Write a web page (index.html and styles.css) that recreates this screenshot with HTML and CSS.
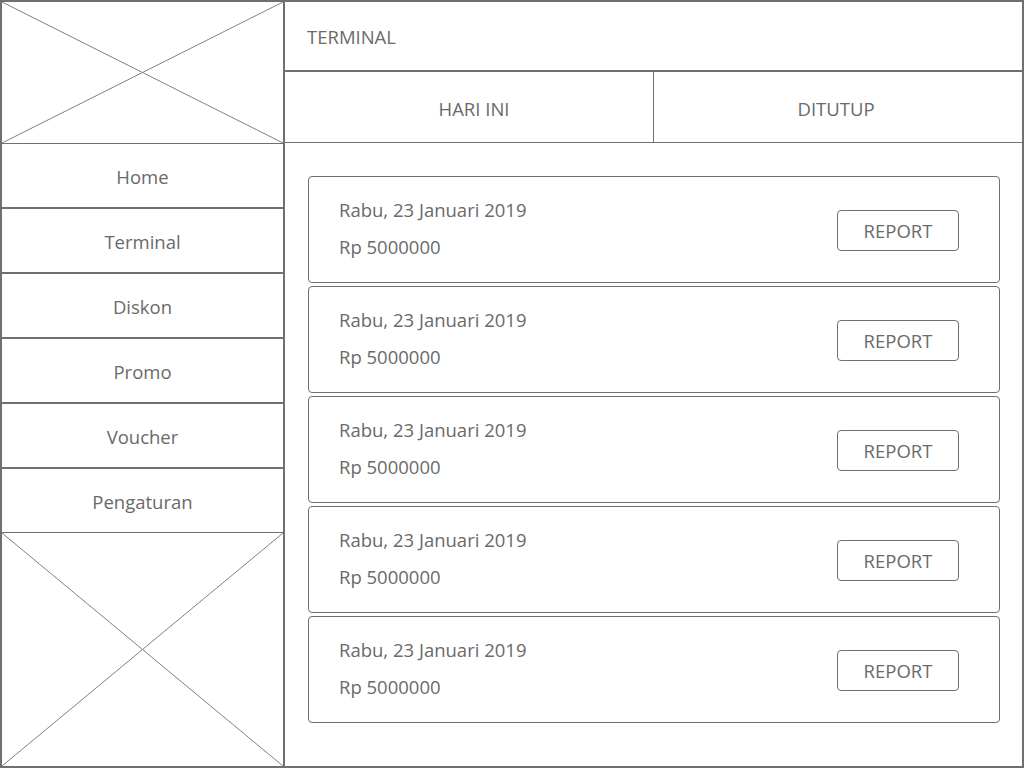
FILE: index.html
```html
<!DOCTYPE html>
<html lang="id">
<head>
<meta charset="utf-8">
<title>Terminal</title>
<link rel="stylesheet" href="styles.css">
</head>
<body>
<div class="app">
  <aside class="sidebar">
    <div class="placeholder logo">
      <svg class="cross" viewBox="0 0 100 100" preserveAspectRatio="none">
        <line x1="0" y1="0" x2="100" y2="100"/>
        <line x1="100" y1="0" x2="0" y2="100"/>
      </svg>
    </div>
    <nav class="menu">
      <div class="menu-item first">Home</div>
      <div class="menu-item">Terminal</div>
      <div class="menu-item">Diskon</div>
      <div class="menu-item">Promo</div>
      <div class="menu-item">Voucher</div>
      <div class="menu-item last">Pengaturan</div>
    </nav>
    <div class="placeholder bottom">
      <svg class="cross" viewBox="0 0 100 100" preserveAspectRatio="none">
        <line x1="0" y1="0" x2="100" y2="100"/>
        <line x1="100" y1="0" x2="0" y2="100"/>
      </svg>
    </div>
  </aside>
  <main class="main">
    <header class="title">TERMINAL</header>
    <div class="tabs">
      <div class="tab">HARI INI</div>
      <div class="tab">DITUTUP</div>
    </div>
    <section class="list">
      <div class="card">
        <div class="info"><div>Rabu, 23 Januari 2019</div><div>Rp 5000000</div></div>
        <div class="btn">REPORT</div>
      </div>
      <div class="card">
        <div class="info"><div>Rabu, 23 Januari 2019</div><div>Rp 5000000</div></div>
        <div class="btn">REPORT</div>
      </div>
      <div class="card">
        <div class="info"><div>Rabu, 23 Januari 2019</div><div>Rp 5000000</div></div>
        <div class="btn">REPORT</div>
      </div>
      <div class="card">
        <div class="info"><div>Rabu, 23 Januari 2019</div><div>Rp 5000000</div></div>
        <div class="btn">REPORT</div>
      </div>
      <div class="card">
        <div class="info"><div>Rabu, 23 Januari 2019</div><div>Rp 5000000</div></div>
        <div class="btn">REPORT</div>
      </div>
    </section>
  </main>
</div>
</body>
</html>
```
FILE: styles.css
```css
* { box-sizing: border-box; }
html, body { margin: 0; padding: 0; background: #fff; }
body {
  font-family: "Open Sans", "Liberation Sans", sans-serif;
  font-size: 18.5px;
  color: #6a6a6a;
}
.app {
  width: 1024px;
  height: 768px;
  border: 2px solid #707070;
  display: grid;
  grid-template-columns: 283px 1fr;
  overflow: hidden;
}
.sidebar {
  border-right: 2px solid #707070;
  display: flex;
  flex-direction: column;
  min-height: 0;
}
.placeholder { position: relative; }
.logo { height: 142px; border-bottom: 1px solid #707070; }
.bottom { flex: 1; }
.cross {
  position: absolute;
  inset: 0;
  width: 100%;
  height: 100%;
}
.cross line {
  stroke: #808080;
  stroke-width: 1;
  vector-effect: non-scaling-stroke;
}
.menu { display: flex; flex-direction: column; }
.menu-item {
  height: 65px;
  border-bottom: 2px solid #707070;
  display: flex;
  align-items: center;
  justify-content: center;
  padding-top: 1px;
}
.menu-item.first { height: 65px; }
.menu-item.last { border-bottom-width: 1px; height: 64px; }
.main { display: flex; flex-direction: column; min-width: 0; }
.title {
  height: 70px;
  border-bottom: 2px solid #707070;
  display: flex;
  align-items: center;
  padding-left: 22px;
}
.tabs {
  height: 71px;
  border-bottom: 1px solid #707070;
  display: grid;
  grid-template-columns: 369px 1fr;
}
.tab {
  display: flex;
  align-items: center;
  justify-content: center;
  padding-top: 2px;
}
.tab:first-child { border-right: 1px solid #707070; padding-left: 10px; }
.tab:last-child { padding-right: 4px; }
.list {
  padding: 33px 22px 0 23px;
  display: flex;
  flex-direction: column;
  gap: 3px;
}
.card {
  height: 107px;
  border: 1px solid #707070;
  border-radius: 4px;
  display: flex;
  align-items: center;
  justify-content: space-between;
  padding: 0 40px 0 30px;
}
.info { line-height: 37px; margin-top: -3px; }
.btn {
  width: 122px;
  height: 41px;
  border: 1px solid #707070;
  border-radius: 4px;
  display: flex;
  align-items: center;
  justify-content: center;
  margin-top: 2px;
}
```
